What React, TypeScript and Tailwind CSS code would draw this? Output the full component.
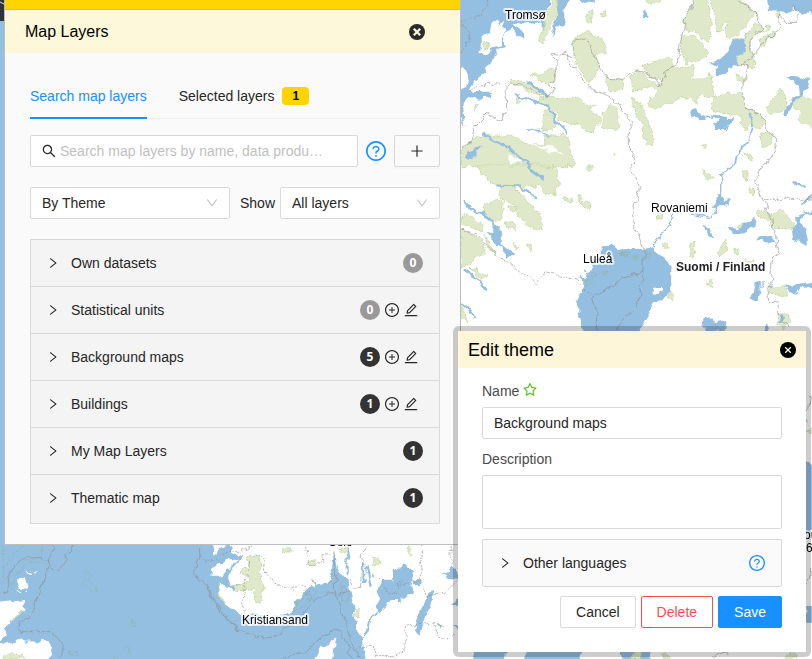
import type { ReactNode } from 'react';
import {
    AiOutlineDown,
    AiOutlineEdit,
    AiOutlinePlus,
    AiOutlinePlusCircle,
    AiOutlineQuestionCircle,
    AiOutlineRight,
    AiOutlineSearch,
    AiOutlineStar,
} from 'react-icons/ai';

const WATER = '#94bfe1';
const FOREST = '#dfe9ca';

// Trims the empty margin round the Ant glyphs
const ICON_BOX = '64 64 896 896';

const themes = [
    { name: 'Own datasets', count: 0, editable: false },
    { name: 'Statistical units', count: 0, editable: true },
    { name: 'Background maps', count: 5, editable: true },
    { name: 'Buildings', count: 1, editable: true },
    { name: 'My Map Layers', count: 1, editable: false },
    { name: 'Thematic map', count: 1, editable: false },
];

const mapLabels = [
    { text: 'Tromsø', x: 505, y: 19 },
    { text: 'Rovaniemi', x: 651, y: 212 },
    { text: 'Luleå', x: 583, y: 263 },
    { text: 'Kristiansand', x: 242, y: 624 },
    { text: 'Oslo', x: 328, y: 546 },
    { text: 'ou', x: 804, y: 539 },
    { text: '6', x: 806, y: 552 },
];

// Each sheet is digitised at three times the screen scale
const Sheet = ({ x, y, children }: { x: number; y: number; children: ReactNode }) => (
    <g transform={`translate(${x} ${y}) scale(0.33333)`}>{children}</g>
);

const Forest = ({ d }: { d: string }) => (
    <path d={d} fill={FOREST} stroke="#c6d8a4" strokeWidth="3" strokeDasharray="6 3" strokeLinejoin="round" />
);

const Water = ({ d }: { d: string }) => <path d={d} fill={WATER} />;

const River = ({ d, width = 5 }: { d: string; width?: number }) => (
    <path d={d} fill="none" stroke={WATER} strokeWidth={width} strokeLinejoin="round" strokeLinecap="round" />
);

const Border = ({ d, dashed = false }: { d: string; dashed?: boolean }) => (
    <path
        d={d}
        fill="none"
        stroke="#8a8a8a"
        strokeOpacity="0.6"
        strokeWidth="3"
        strokeLinejoin="round"
        strokeDasharray={dashed ? '7 4' : undefined}
    />
);

const MapBackground = () => (
    <svg
        className="absolute inset-0 h-full w-full"
        viewBox="0 0 812 659"
        preserveAspectRatio="xMinYMin slice"
        aria-hidden="true"
    >
        <filter id="ragged" filterUnits="userSpaceOnUse" x="0" y="0" width="812" height="659" colorInterpolationFilters="sRGB">
            <feTurbulence type="fractalNoise" baseFrequency="0.12" numOctaves="2" seed="4" />
            <feDisplacementMap in="SourceGraphic" scale="8" xChannelSelector="R" yChannelSelector="G" />
        </filter>

        <rect width="812" height="659" fill="#fff" />
        <rect width="460" height="659" fill={WATER} />
        <rect width="5" height="21" fill="#2e3338" />
        <path d="M0 2l4 2" stroke="#ddd" fill="none" />

        <g filter="url(#ragged)">
            {/* Northern Norway and Lapland */}
            <Sheet x={460} y={0}>
                <Water d="M-20 -20H280L260 30L240 72L205 70L170 62L162 78L180 90L195 112L175 112L158 85L135 100L135 140L110 147L98 180L80 212L50 235L32 262L38 276L98 275L96 290L60 296L22 290L12 305L10 330L16 380L0 345L-20 340Z" />
                <path d="M92 75L105 65L118 75L132 66L136 95L125 135L95 142L85 165L55 162L52 155L65 148L65 105L90 100ZM0 200Q26 205 28 240L20 262L0 268Z" fill="#fff" />
                <Water d="M245 60L262 20L258 70L245 98ZM292 -15H348L325 8L307 35L316 72L298 76L272 110L290 60ZM350 -15H400L402 15L385 5L370 10ZM546 38L562 41L562 56L550 58Z" />
                <Water d="M922 -15H1076V38L1020 42L1000 24L985 36L970 28L950 36L930 30Z" />
                <Forest d="M275 5L292 0L288 50L265 95L250 135L235 125L250 80L262 40Z" />
                <Forest d="M72 122L88 122L90 140L75 148Z" />
                <Forest d="M385 30L395 25L398 68L385 70L378 55ZM420 35L440 30L440 42L425 48ZM553 -10H602L598 14L570 10Z" />
                <Forest d="M708 -10H745L752 50L755 110L745 128L710 100L675 85L675 60L700 15Z" />
                <Forest d="M754 -10H835L892 42L870 60L830 105L805 115L795 95L805 65L785 70L790 95L770 95L765 55Z" />
                <Forest d="M665 110L700 105L725 130L742 158L720 180L675 190L665 150Z" />
                <Forest d="M895 70L905 85L885 110L870 125L870 160L882 170L880 205L840 195L820 175L808 145L820 118L850 110Z" />
                <Forest d="M905 95L920 75L930 75L920 95ZM902 120L940 95L945 100L920 118L920 135L905 135ZM945 40L958 35L955 52Z" />
                <Forest d="M336 130L350 103L385 97L425 115L440 140L435 158L405 160L420 205L390 245L350 200Z" />
                <Forest d="M546 200L610 180L625 168L640 180L640 205L600 240L560 222Z" />
                <Forest d="M215 220L250 225L270 205L288 205L285 235L265 255L245 248Z" />
                <Forest d="M440 225L488 245L488 272L450 275L436 255Z" />
                <Forest d="M516 230L530 208L600 258L625 210L700 195L705 220L695 240L750 222L760 240L755 270L768 290L740 290L715 280L712 315L690 290L650 300L590 325L565 320L570 295L595 275L590 262L515 275Z" />
                <Forest d="M155 235L200 250L240 262L262 290L235 285L160 258ZM170 295L180 290L185 305L170 312ZM40 310L52 310L50 328L40 322Z" />
                <Forest d="M238 292L360 293L370 310L408 318L385 328L420 350L422 372L410 372L400 400L350 375L300 358L280 330L240 305Z" />
                <Forest d="M250 328L270 328L292 365L275 390L250 390Z" />
                <Forest d="M432 340L455 310L470 325L478 380L460 395L428 380Z" />
                <Forest d="M515 295L540 305L560 365L575 385L580 425L562 442L552 410L548 372L525 345Z" />
                <Forest d="M768 285L848 278L858 325L905 345L915 372L895 385L870 365L860 390L845 385L845 350L750 330Z" />
                <Forest d="M960 262L978 285L975 310L985 332L930 340L918 325L950 280Z" />
                <Forest d="M1000 290L1030 285L1076 320V400L1040 370L1010 360L1025 340L1000 325Z" />
                <Forest d="M905 400L935 395L930 435L905 435ZM845 462L880 468L872 480ZM825 228L852 228L848 245L830 245ZM725 440L740 437L735 452ZM458 458L472 460L462 468Z" />
                <Forest d="M20 440L40 412L95 405L150 405L200 432L258 430L255 405L300 405L325 410L335 455L340 500H0V450Z" />
                <path d="M140 462L170 475L190 490H155ZM205 427L270 442L315 460L270 455Z" fill="#fff" />
                <Water d="M870 92L850 112L858 135L848 162L825 168L838 195L810 200L800 220L765 230L775 200L748 192L780 180L806 145L815 122L840 118Z" />
                <Water d="M688 335L705 330L735 345L742 362L720 360L690 347ZM755 342L790 350L822 352L820 362L800 372L795 390L770 390L762 375L772 360Z" />
                <Water d="M985 235L1010 232L1050 240L1040 265L1028 285L1000 310L985 345L973 345L985 305L1020 280L1015 262Z" />
                <Water d="M18 452L70 435L45 462L40 482L15 475Z" />
                <River d="M200 245L235 262L260 290M170 280L180 290L215 300L265 320L290 365L320 395M315 382L320 398" width={7} />
                <River d="M203 390L240 392L265 405" />
                <River d="M70 400L100 422L150 445L180 475L208 495" width={7} />
                <River d="M868 343L880 370L868 420L830 462L825 495M740 350L760 352" />
                <Border d="M85 0L65 45L0 65M0 60L30 95L20 130L0 165" dashed />
                <Border d="M32 270L60 255L135 250" dashed />
                <Border d="M0 448L30 430L45 375L80 340L125 365L140 330L138 258L155 252L210 265L265 292L282 270L268 255L288 215L288 180L272 165L310 160L340 170" />
                <Border d="M300 160L318 152L330 195L400 270L455 290L485 330L500 345L518 370L505 390L505 450L522 465L520 495" />
                <Border d="M340 165L335 135L350 115L378 120L410 180L430 225L485 242L525 210L545 215L585 235L602 258L620 215L655 190L660 130L680 50L705 0" />
                <Border d="M835 0L890 40L905 85L870 125L870 155L885 170L902 130L960 90L955 42L985 70L1010 70L1012 30L1000 20M885 170L845 195L865 200L845 260L858 325L905 345L920 385L950 420L945 450L915 495" />
            </Sheet>

            {/* Bothnian Bay and Finland */}
            <Sheet x={460} y={165}>
                <Forest d="M50 0H230L290 10L298 50L280 90L255 85L240 65L205 60L185 70L160 68L195 100L240 150L250 188L205 185L172 150L165 120L125 100L115 60L80 50Z" />
                <Forest d="M70 125L110 105L130 110L125 160L100 170L70 150ZM0 155L25 150L70 180L65 200L0 175ZM0 190L35 205L75 240L65 270L45 275L30 300L0 305Z" />
                <Forest d="M30 310L60 315L80 340L65 345ZM75 210L105 265L85 255ZM135 170L165 180L170 198L140 188ZM160 232L180 245L170 254ZM198 240L210 235L218 248L205 257ZM355 95L388 120L390 135L375 130ZM310 95L335 100L330 108L312 105ZM0 415L15 440L20 470L0 455Z" />
                <Forest d="M145 122L170 125L168 138L148 135ZM385 0L405 8L395 16L382 10Z" />
                <Water d="M425 240L440 247L455 238L475 255L520 248L540 252L575 248L590 268L632 295L630 350L635 385L615 395L608 405L582 415L562 455L535 500L530 540H375L370 500L355 460L362 440L345 410L372 365L365 330L378 340L372 318L395 312L400 290L425 280Z" />
                <path d="M582 372L602 368L607 374L590 386L580 382Z" fill="#fff" />
                <path d="M395 320L410 322L405 340L390 335ZM430 320L440 315L435 330ZM380 345L398 342L395 358L382 362ZM555 265L573 270L565 285L553 282ZM518 280L530 275L530 290ZM475 267L510 262L508 272Z" fill="none" stroke="#92b8a8" strokeWidth="3" />
                <Forest d="M588 152L600 148L606 160L592 165ZM605 235L622 232L625 250L605 245ZM690 235L702 235L704 275L688 278ZM795 225L803 235L800 258L785 275L777 270ZM822 250L838 255L835 268L820 262ZM745 340L758 345L758 370L745 360ZM735 15L760 40L745 45L732 30ZM850 20L865 25L862 42L848 32ZM868 72L885 75L880 90L866 84ZM835 180L855 172L855 185L837 188ZM622 385L636 392L632 408L625 402ZM855 285L880 282L870 292Z" />
                <Forest d="M890 130L930 145L965 138L998 170L1000 192L950 190L920 165L890 150Z" />
                <Forest d="M925 362L975 362L980 390L930 392ZM950 445L985 448L990 470L970 490L950 475Z" />
                <Water d="M762 130L772 95L782 92L795 108L812 105L805 120L780 125ZM732 180L745 192L762 200L762 220L745 210ZM805 187L835 193L855 175L880 160L890 172L860 190L850 205L820 208ZM892 222L935 215L948 235L900 230Z" />
                <Water d="M995 190L1008 180L1005 160L1030 150L1025 170L1040 215L1040 245L1020 228L1000 222ZM888 350L900 348L897 385L893 408L870 400L882 380ZM915 345L905 355L895 380ZM972 355L1000 362L1076 350V368L1020 372L1000 392L985 378ZM725 455L760 458L765 472L800 465L795 500H735ZM962 450L972 452L970 475L955 472ZM915 480L925 475L928 500H918Z" />
                <Water d="M83 200L100 205L100 180L115 185L125 215L125 240L165 265L140 280L130 250L105 235Z" />
                <River d="M205 5L225 25L250 38" width={10} />
                <River d="M112 62L180 65L205 85L228 102M14 112L25 130L65 145L100 170L112 190" width={7} />
                <River d="M14 315L55 345L75 370M5 412L30 435L45 460M1000 55L1040 65M1025 120L1056 90M1020 150L1056 140" width={7} />
                <River d="M578 250L600 205L630 183L640 145M690 147L755 158L770 130L782 90L782 30L820 0" width={4} />
                <Border d="M512 0L520 30L538 75L520 130L518 165L550 250L548 350L528 435L490 460L470 495V530M400 400L475 350L492 335L550 318M395 400L410 450L408 530M0 190L50 210L110 270" />
                <Border d="M110 270L190 325L228 355L262 320L350 350L400 395M905 103H1056" dashed />
                <Border d="M912 0L885 50L905 100L930 150L945 210L960 268L935 275L930 330L942 345L922 370L930 410L960 415L950 440L985 490" />
            </Sheet>

            {/* North Sea coast */}
            <Sheet x={0} y={530}>
                <path d="M-10 218L72 210L70 240L40 268L8 300L18 315L-10 345ZM-10 347L55 330L80 335L145 333L160 355L140 400H-10ZM55 145L70 143L76 158L90 168L85 173L62 170L55 160ZM75 118L95 132L90 136ZM103 128L116 122L108 131ZM52 175L62 186L55 188ZM76 186L83 184L80 193Z" fill="#fff" />
                <Forest d="M12 380L38 368L75 385L78 387H12ZM35 270L70 242L60 255Z" />
                <path d="M255 120L272 132L262 150L288 170L288 185L270 182L248 160ZM395 268L406 282L402 292L395 288ZM210 368L235 362L232 375L210 377ZM338 383L350 383L372 355L387 356V387M0 50L10 55V95L0 95M68 45L15 110L10 140L35 165L50 130L80 97H125V45" fill="none" stroke="#8db4a8" strokeWidth="2" strokeDasharray="7 4" />
                <Border d="M160 45L168 60L150 70L145 95L120 82L75 85L45 105L28 130L22 187H0M222 45Q215 70 198 73Q205 110 175 119Q150 122 145 95M147 110L132 150L110 205L98 245L60 288L70 305L150 305Q195 320 185 365L175 387M598 45L600 80Q580 125 590 142L620 170Q640 230 680 265L720 302" />
            </Sheet>

            {/* Southern Scandinavia */}
            <Sheet x={200} y={530}>
                <path d="M35 25H75L75 45L40 75ZM50 100L118 82L85 120L80 127L60 137L34 137L40 110ZM80 25H790V400H500L485 335L465 270L455 200L445 150L425 135L412 110L405 60L400 80L395 125L380 158L350 163L335 150L345 172L320 180L300 205L265 257L125 255L72 222L60 195L62 162L100 180L140 165L92 170L84 150L90 120L130 80L100 70ZM335 400L365 350L400 330L410 325L400 355L395 400Z" fill="#fff" />
                <Forest d="M145 80L180 75L185 110L175 120L190 135L192 170L185 215L165 218L163 180L110 182L105 175L150 152L145 137L120 130L125 118L145 120Z" />
                <Forest d="M245 58L275 48L272 68L250 72ZM322 105L330 95L348 92L345 102ZM518 82L532 82L542 105L520 108ZM622 50L635 62L637 80L625 70ZM420 55L440 55L438 68L425 68ZM468 240L478 235L475 262L465 265ZM62 165V195L75 222L60 200Z" />
                <path d="M395 130L410 135L410 160L385 160ZM425 165L442 175L445 215L425 215ZM335 175L270 250L300 235L345 185Z" fill="none" stroke="#8db4a8" strokeWidth="2" />
                <Water d="M578 118L610 110L642 118L640 150L635 190L600 210L572 210L540 245L530 235L540 205L530 180L545 152L580 152Z" />
                <Water d="M700 178L705 190L695 215L680 245L655 318L645 300L650 275L665 240L685 190ZM722 125L750 128L760 120L775 130V145L745 140ZM708 280L730 290L720 300ZM640 150L662 155L660 175L645 165Z" />
                <River d="M442 50L448 80L440 105L440 130M490 100L495 160M500 110L512 165M530 242L510 270L505 300L488 320" width={6} />
                <Border d="M0 150L20 165Q50 240 105 285Q150 325 210 323Q280 300 340 212Q370 190 410 190L450 185M405 80L407 200L430 255L455 345L480 387M450 150L460 170L485 172L488 90L480 75L495 55V45M250 385L280 373L315 372Q350 325 405 298Q440 310 440 345L460 387" />
                <Border d="M165 75L195 80L190 120L225 160L270 180L310 165L325 190L342 212M152 90L130 185L132 250M0 88L60 97L70 70L120 60L160 55M320 50L330 105L365 100L370 75L395 75M495 130L530 140L555 165L560 185L590 195L595 160L660 155M665 50L658 150L680 200L730 190L770 150M455 355L520 345L530 380L580 380L615 350L620 285L700 280L710 315L740 330L770 310M750 45L760 130" dashed />
            </Sheet>

            {/* Southern Finland and the Baltic */}
            <Sheet x={450} y={480}>
                <Water d="M60 550L80 510H172L165 550ZM210 550L240 510H402L380 550ZM505 510H602L598 550H515ZM0 262L24 270V290L0 285ZM0 370L24 355V375ZM8 435L24 440V455Z" />
                <Forest d="M545 537L555 510H575L570 537ZM630 520L650 515L670 537H635ZM1005 537L1020 515L1045 525L1040 537Z" />
                <Border d="M1065 -170L1080 -250M1065 310Q1085 290 1086 270M790 530L830 515L835 530" />
                <Water d="M1050 -70L1100 -40V150L1050 160ZM1066 370L1100 385V415L1066 430Z" />
                <Forest d="M1066 -150L1100 -170V-130Z" />
            </Sheet>
        </g>

        <g
            fontFamily="'Liberation Sans', Arial, sans-serif"
            fontSize="12"
            fill="#000"
            stroke="#fff"
            strokeOpacity="0.75"
            strokeWidth="4"
            strokeLinejoin="round"
            paintOrder="stroke"
        >
            {mapLabels.map((label) => (
                <text key={label.text} x={label.x} y={label.y}>
                    {label.text}
                </text>
            ))}
            <text x="676" y="271" fontWeight="bold" fill="#222">
                Suomi / Finland
            </text>
        </g>
    </svg>
);

const CloseButton = ({ heavy = false }: { heavy?: boolean }) => (
    <button type="button" aria-label="Close" className="shrink-0 cursor-pointer">
        <svg viewBox="0 0 16 16" className="block h-4 w-4">
            <circle cx="8" cy="8" r="8" fill={heavy ? '#2b2b2b' : '#000'} />
            <path
                d={heavy ? 'M4.8 4.8l6.4 6.4M11.2 4.8l-6.4 6.4' : 'M5.2 5.2l5.6 5.6M10.8 5.2l-5.6 5.6'}
                stroke="#fdf8d9"
                strokeWidth={heavy ? 2.3 : 1.3}
            />
        </svg>
    </button>
);

const SelectBox = ({ label, value, className }: { label: string; value: string; className: string }) => (
    <div className={`grid items-center rounded-xs border border-[#d9d9d9] bg-white ${className}`}>
        <select
            aria-label={label}
            defaultValue={value}
            className="col-start-1 row-start-1 h-[30px] w-full appearance-none bg-transparent px-[11px] outline-none"
        >
            <option>{value}</option>
        </select>
        <AiOutlineDown
            viewBox={ICON_BOX}
            className="pointer-events-none col-start-1 row-start-1 mr-[11px] h-3 w-3 justify-self-end text-[#bfbfbf]"
        />
    </div>
);

const ThemeRow = ({ name, count, editable }: { name: string; count: number; editable: boolean }) => (
    <li className="flex h-[47px] items-center border-b border-[#d9d9d9] px-4 last:border-transparent">
        <button type="button" className="flex flex-1 items-center gap-3 text-left">
            <AiOutlineRight viewBox={ICON_BOX} className="h-3 w-3" />
            {name}
        </button>
        <div className={`flex items-center gap-[5px] ${editable ? 'mr-[5px]' : ''}`}>
            <span
                className={`flex h-5 w-5 items-center justify-center rounded-full font-['Noto_Sans',sans-serif] text-xs font-bold text-white ${
                    count > 0 ? 'bg-[#333]' : 'bg-[#999]'
                }`}
            >
                {count}
            </span>
            {editable && (
                <>
                    <button type="button" aria-label={`Add subtheme to ${name}`}>
                        <AiOutlinePlusCircle viewBox={ICON_BOX} className="h-3.5 w-3.5" />
                    </button>
                    <button type="button" aria-label={`Edit ${name}`}>
                        <AiOutlineEdit viewBox={ICON_BOX} className="h-3.5 w-3.5" />
                    </button>
                </>
            )}
        </div>
    </li>
);

const LayersPanel = () => (
    <section className="relative ml-1 w-[457px] border border-t-0 border-[#bdbdbd] bg-[#fafafa]">
        <div className="h-[10px] border-b border-[#f0c000] bg-[#ffd400]" />
        <header className="flex h-[43px] items-center justify-between bg-[#fdf8d9] pr-[35px] pl-5">
            <h1 className="text-base text-black">Map Layers</h1>
            <CloseButton heavy />
        </header>

        <div className="flex flex-col gap-5 py-5 pr-5 pl-[25px]">
            <div className="flex flex-col gap-4">
                <div role="tablist" className="flex gap-8 border-b border-[#f0f0f0] leading-[22px]">
                    <button
                        type="button"
                        role="tab"
                        aria-selected="true"
                        className="-mb-px border-b-2 border-[#1890ff] pt-3 pb-[10px] text-[#1890ff]"
                    >
                        Search map layers
                    </button>
                    <button type="button" role="tab" aria-selected="false" className="flex items-center gap-2">
                        Selected layers
                        <span className="flex h-[18px] w-[27px] items-center justify-center rounded-sm bg-[#ffd400] text-xs font-bold text-black">
                            1
                        </span>
                    </button>
                </div>

                <div className="flex items-center gap-2">
                    <label className="flex h-8 min-w-0 flex-1 items-center gap-1 rounded-xs border border-[#d9d9d9] bg-white pr-8 pl-[11px]">
                        <AiOutlineSearch viewBox={ICON_BOX} className="h-3.5 w-3.5 shrink-0" />
                        <input
                            type="text"
                            aria-label="Search map layers"
                            placeholder="Search map layers by name, data produ…"
                            className="w-full min-w-0 bg-transparent outline-none placeholder:text-[#bfbfbf]"
                        />
                    </label>
                    <AiOutlineQuestionCircle viewBox={ICON_BOX} className="h-5 w-5 shrink-0 text-[#1890ff]" />
                    <button
                        type="button"
                        aria-label="Add layer"
                        className="flex h-8 w-[46px] items-center justify-center rounded-xs border border-[#d9d9d9] shadow-[0_2px_0_rgba(0,0,0,0.015)]"
                    >
                        <AiOutlinePlus viewBox={ICON_BOX} className="h-3.5 w-3.5" />
                    </button>
                </div>
            </div>

            <div className="flex items-center">
                <SelectBox label="Grouping" value="By Theme" className="w-[200px]" />
                <span className="ml-[10px] flex-1">Show</span>
                <SelectBox label="Show" value="All layers" className="w-40" />
            </div>

            <ul className="border border-[#d9d9d9] bg-[#f4f4f4] pb-px">
                {themes.map((theme) => (
                    <ThemeRow key={theme.name} {...theme} />
                ))}
            </ul>
        </div>
    </section>
);

const EditThemeDialog = () => (
    <div
        role="dialog"
        aria-labelledby="edit-theme-title"
        className="absolute top-[326px] left-[453px] w-[358px] rounded-md bg-black/20 p-[5px]"
    >
        <header className="flex h-[37px] items-center justify-between bg-[#fdf6d8] px-[10px]">
            <h2 id="edit-theme-title" className="text-lg text-black">
                Edit theme
            </h2>
            <CloseButton />
        </header>
        <form className="bg-white px-6 pt-3 pb-6 leading-[22px]">
            <div className="flex h-[27px] items-start gap-1 text-[#4a4a4a]">
                <label htmlFor="theme-name">Name</label>
                <AiOutlineStar viewBox={ICON_BOX} className="mt-[3px] h-3.5 w-3.5 text-[#52c41a]" />
            </div>
            <input
                id="theme-name"
                type="text"
                defaultValue="Background maps"
                className="block h-8 w-full rounded-xs border border-[#d9d9d9] px-[11px] outline-none"
            />
            <label htmlFor="theme-description" className="mt-[9px] block h-[27px] text-[#4a4a4a]">
                Description
            </label>
            <textarea
                id="theme-description"
                className="block h-[54px] w-full resize-none rounded-xs border border-[#d9d9d9] outline-none"
            />
            <div className="mt-[10px] flex h-12 items-center justify-between rounded-xs border border-[#d9d9d9] bg-[#fafafa] px-4">
                <button type="button" className="flex flex-1 items-center gap-3">
                    <AiOutlineRight viewBox={ICON_BOX} className="h-3 w-3" />
                    Other languages
                </button>
                <AiOutlineQuestionCircle viewBox={ICON_BOX} className="h-4 w-4 text-[#1890ff]" />
            </div>
            <div className="mt-[9px] flex justify-end gap-[5px]">
                <button type="button" className="h-8 rounded-xs border border-[#d9d9d9] px-[15px]">
                    Cancel
                </button>
                <button type="button" className="h-8 rounded-xs border border-[#ff4d4f] px-[15px] text-[#ff4d4f]">
                    Delete
                </button>
                <button type="submit" className="h-8 rounded-xs border border-[#1890ff] bg-[#1890ff] px-[15px] text-white">
                    Save
                </button>
            </div>
        </form>
    </div>
);

const App = () => {
    return (
        <main className="relative min-h-screen overflow-hidden font-['Liberation_Sans',Arial,sans-serif] text-sm text-[#262626]">
            <MapBackground />
            <LayersPanel />
            <EditThemeDialog />
        </main>
    );
};

export default App;
